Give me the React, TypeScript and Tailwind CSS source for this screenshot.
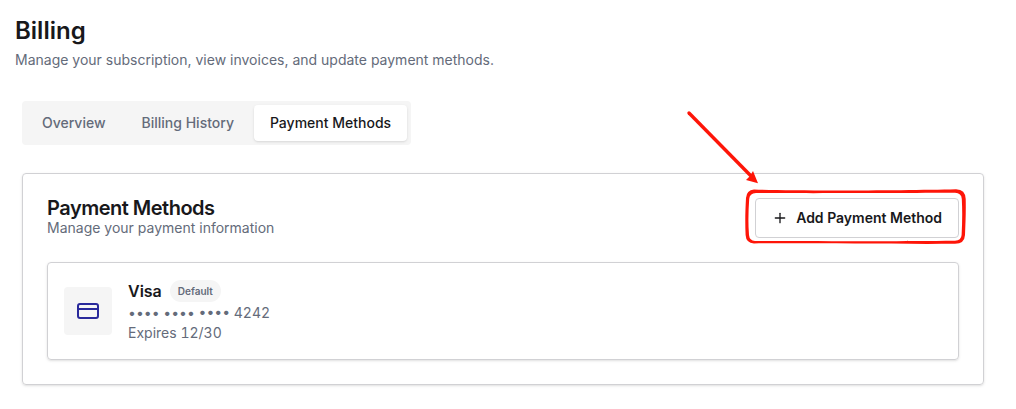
import { CreditCard, Plus } from 'lucide-react';

const tabs = [
  { id: 'overview', label: 'Overview' },
  { id: 'history', label: 'Billing History' },
  { id: 'methods', label: 'Payment Methods' },
];

const methods = [{ id: 1, brand: 'Visa', last4: '4242', expires: '12/30', isDefault: true }];

function TabBar({ active }: { active: string }) {
  return (
    <div role="tablist" className="inline-flex gap-1 rounded bg-[#f5f5f5] p-1">
      {tabs.map((tab) => (
        <button
          key={tab.id}
          type="button"
          role="tab"
          aria-selected={tab.id === active}
          className={`h-9 rounded px-4 text-sm font-medium whitespace-nowrap ${
            tab.id === active ? 'bg-white text-[#18181b] shadow-sm' : 'text-[#646b7a]'
          }`}
        >
          {tab.label}
        </button>
      ))}
    </div>
  );
}

function Callout() {
  return (
    <svg
      aria-hidden="true"
      className="pointer-events-none absolute -top-[88px] -right-2 h-[136px] w-[282px]"
      viewBox="0 0 282 136"
      fill="#fe1508"
    >
      <path d="M4 3 L66 66" stroke="#fe1508" strokeWidth="3.4" strokeLinecap="round" />
      <path d="M73 73.2 L61 70 L65 66 L68 61 Z" />
      <path
        fillRule="evenodd"
        d="M69 79.5 C110 81 220 80.5 271 79.2 Q280.5 79.5 280.7 89 C281 102 280.5 113 280 125 Q279.5 133.8 270 133.8 C210 134.2 130 133 69 133.4 Q61 133 60.6 125 C60 112 60.3 101 61 88 Q61.5 80 69 79.5 Z M71 83 Q64.5 83.5 64.2 89 C63.4 101 63 112 64 125 Q64.5 130.7 70 131 C130 131 210 131.6 270 130.8 Q276.2 130.5 276.6 125 C277.2 113 277.5 102 276.8 89 Q276.5 83 270 82.8 C220 83 120 83.4 71 83 Z"
      />
    </svg>
  );
}

export default function App() {
  return (
    <main className="bg-white px-[15px] pt-[15px] pb-6 font-['Inter',sans-serif] text-[#18181b]">
      <h1 className="text-2xl font-semibold">Billing</h1>
      <p className="mt-[3px] text-sm text-[#646b7a]">
        Manage your subscription, view invoices, and update payment methods.
      </p>

      <div className="mt-[31px] mr-[17px] ml-[7px]">
        <TabBar active="methods" />

        <section className="mt-7 rounded border border-[#d1d1d4] p-6 shadow-sm">
          <div className="flex items-center justify-between">
            <div>
              <h2 className="text-xl leading-5 font-semibold tracking-tight">Payment Methods</h2>
              <p className="text-sm text-[#646b7a]">Manage your payment information</p>
            </div>
            <div className="relative">
              <button
                type="button"
                className="flex h-10 items-center gap-2 rounded border border-[#d1d1d4] bg-white px-4 text-sm font-semibold"
              >
                <Plus className="size-4" strokeWidth={2} />
                Add Payment Method
              </button>
              <Callout />
            </div>
          </div>

          <ul className="mt-6">
            {methods.map((m) => (
              <li
                key={m.id}
                className="flex items-center gap-4 rounded border border-[#d1d1d4] p-4 shadow-sm"
              >
                <div className="flex size-12 items-center justify-center rounded bg-[#f5f5f5]">
                  <CreditCard className="size-6 text-[#29299b]" strokeWidth={2} />
                </div>
                <div className="text-sm text-[#646b7a] tabular-nums">
                  <div className="flex h-6 items-center gap-2">
                    <span className="text-base font-semibold text-[#18181b]">{m.brand}</span>
                    {m.isDefault && (
                      <span className="rounded-full bg-[#f5f5f5] px-2 text-[10px] leading-[22px] font-semibold">
                        Default
                      </span>
                    )}
                  </div>
                  <p>•••• •••• •••• {m.last4}</p>
                  <p>Expires {m.expires}</p>
                </div>
              </li>
            ))}
          </ul>
        </section>
      </div>
    </main>
  );
}
